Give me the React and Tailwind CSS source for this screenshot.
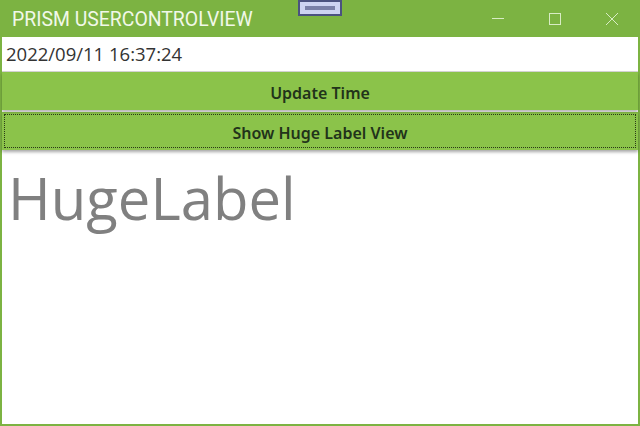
import React from "react";

const App = () => {
  return (
    <div className="w-[640px] h-[426px] flex flex-col bg-[#7cb342] overflow-hidden" style={{ fontFamily: "'Noto Sans', 'Open Sans', sans-serif" }}>
      {/* Title bar */}
      <div className="relative h-[37px] flex items-center shrink-0">
        <span className="pl-[12px] pt-[2px] text-[19.4px] text-[#f1f8e9]" style={{ fontFamily: "Roboto, sans-serif" }}>
          PRISM USERCONTROLVIEW
        </span>
        <div className="absolute left-[298px] top-0 w-[44px] h-[16px] bg-[#cdd3f2] border-2 border-[#4b5280] flex items-center justify-center">
          <div className="w-[30px] h-[4px] bg-[#7a80a8]"></div>
        </div>
        <div className="ml-auto flex h-full">
          <div className="w-[57px] flex items-center justify-center">
            <div className="w-[12px] h-[1px] bg-[#d8ecc4]"></div>
          </div>
          <div className="w-[57px] flex items-center justify-center">
            <div className="w-[12px] h-[12px] border border-[#d8ecc4]"></div>
          </div>
          <div className="w-[57px] flex items-center justify-center">
            <svg width="14" height="14" viewBox="0 0 14 14">
              <path d="M1 1 L13 13 M13 1 L1 13" stroke="#d8ecc4" strokeWidth="1" />
            </svg>
          </div>
        </div>
      </div>

      {/* Content */}
      <div className="flex-1 mx-[2px] mb-[2px] bg-white flex flex-col">
        <div className="h-[35px] flex items-center px-[4px] border-b border-[#d6d6d6]">
          <span className="text-[18.5px] text-[#333333]" style={{ fontFamily: "'Open Sans', sans-serif" }}>2022/09/11 16:37:24</span>
        </div>
        <button className="h-[38px] pt-[4px] bg-[#8bc34a] text-[16px] font-semibold text-[#22331a] shadow-[0_2px_3px_rgba(0,0,0,0.3)] relative z-10">
          Update Time
        </button>
        <div className="h-[2px]"></div>
        <button className="h-[38px] bg-[#8bc34a] p-[2px] shadow-[0_2px_3px_rgba(0,0,0,0.35)]">
          <div className="h-full pt-[3px] border border-dotted border-[#2a3a18] flex items-center justify-center text-[16px] font-semibold text-[#22331a]">
            Show Huge Label View
          </div>
        </button>
        <div className="pl-[6px] pt-[12px]">
          <span className="text-[58px] leading-[72px] text-[#808080]" style={{ fontFamily: "'Open Sans', sans-serif" }}>
            HugeLabel
          </span>
        </div>
      </div>
    </div>
  );
};

export default App;
